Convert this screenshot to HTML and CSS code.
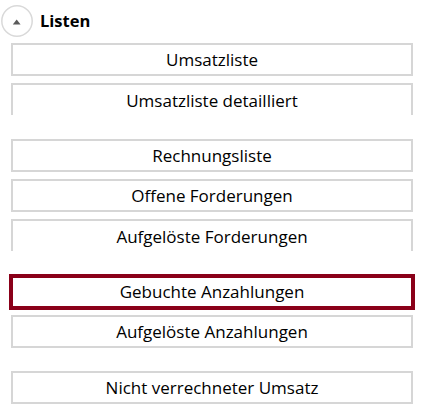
FILE: index.html
```html
<!DOCTYPE html>
<html lang="de">
<head>
<meta charset="utf-8">
<link rel="stylesheet" href="styles.css">
</head>
<body>
<div class="panel">
  <div class="header">
    <span class="toggle">
      <svg width="32" height="32" viewBox="0 0 32 32">
        <circle cx="16" cy="16" r="15.2" fill="#fff" stroke="#d9d9d9" stroke-width="1.5"/>
        <path d="M11.8 19.6 L15.7 14.4 L19.6 19.6 Z" fill="#5a5a5a"/>
      </svg>
    </span>
    <span class="title">Listen</span>
  </div>
  <div class="group">
    <button class="btn">Umsatzliste</button>
    <button class="btn cut">Umsatzliste detailliert</button>
  </div>
  <div class="group">
    <button class="btn">Rechnungsliste</button>
    <button class="btn">Offene Forderungen</button>
    <button class="btn cut">Aufgelöste Forderungen</button>
  </div>
  <div class="group">
    <button class="btn active">Gebuchte Anzahlungen</button>
    <button class="btn">Aufgelöste Anzahlungen</button>
  </div>
  <div class="group">
    <button class="btn">Nicht verrechneter Umsatz</button>
  </div>
</div>
</body>
</html>
```

FILE: styles.css
```css
html, body {
  margin: 0;
  padding: 0;
  background: #ffffff;
}
body {
  font-family: "Open Sans", "Noto Sans", sans-serif;
  color: #000;
}
.panel {
  width: 429px;
  display: flex;
  flex-direction: column;
}
.header {
  display: flex;
  align-items: center;
  height: 43px;
  padding-left: 1px;
  box-sizing: border-box;
  padding-bottom: 1px;
}
.toggle {
  width: 32px;
  height: 32px;
  display: block;
}
.toggle svg {
  display: block;
}
.title {
  margin-left: 7px;
  font-weight: 700;
  font-size: 16.5px;
  color: #000;
  margin-top: -2px;
}
.group {
  display: flex;
  flex-direction: column;
  gap: 7px;
  margin-bottom: 23px;
  padding: 0 16px 0 11px;
}
.btn {
  display: block;
  box-sizing: border-box;
  width: 402px;
  height: 33px;
  margin: 0;
  padding: 0 0 1px;
  background: #fff;
  border: 2px solid #d6d6d6;
  font-family: "Open Sans", "Noto Sans", sans-serif;
  font-size: 17px;
  color: #000;
  text-align: center;
  cursor: pointer;
}
.btn.cut {
  border-bottom: none;
  height: 32px;
  margin-bottom: 1px;
  padding-bottom: 0;
}
.btn.active {
  border: 4px solid #8a0019;
  width: 406px;
  height: 36px;
  margin: -1px -2px -2px;
}
```
